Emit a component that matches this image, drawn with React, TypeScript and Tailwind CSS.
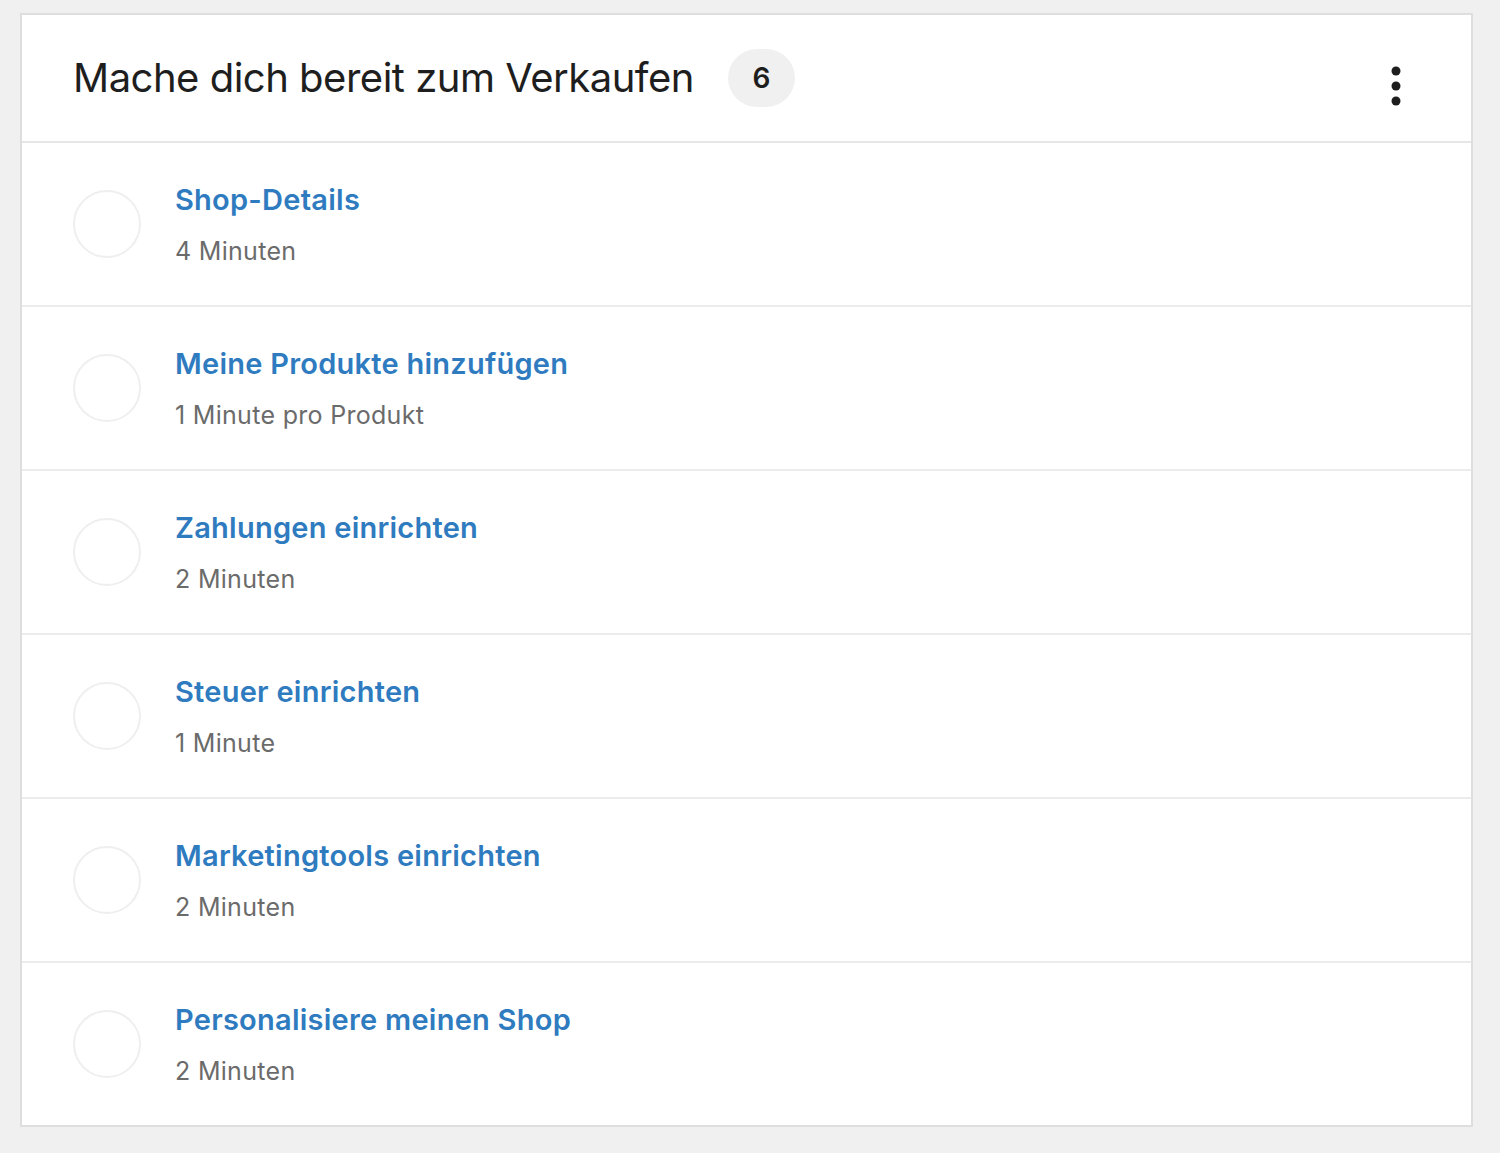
const tasks = [
  { title: 'Shop-Details', time: '4 Minuten' },
  { title: 'Meine Produkte hinzufügen', time: '1 Minute pro Produkt' },
  { title: 'Zahlungen einrichten', time: '2 Minuten' },
  { title: 'Steuer einrichten', time: '1 Minute' },
  { title: 'Marketingtools einrichten', time: '2 Minuten' },
  { title: 'Personalisiere meinen Shop', time: '2 Minuten' },
];

function MoreIcon() {
  return (
    <svg width="12" height="42" viewBox="0 0 12 42" fill="#1e1e1e">
      <circle cx="6" cy="6" r="4.5" />
      <circle cx="6" cy="21" r="4.5" />
      <circle cx="6" cy="36" r="4.5" />
    </svg>
  );
}

export default function App() {
  return (
    <div
      className="min-h-[1153px] bg-[#f0f0f0] pt-[13px] pl-[20px] pr-[27px] pb-[27px]"
      style={{ fontFamily: 'Inter, "Noto Sans", sans-serif' }}
    >
      <div className="bg-white border-2 border-[#dedede]">
        {/* Header */}
        <div className="flex items-center h-[128px] pl-[51px] pr-[69px] border-b-2 border-[#e6e6e6]">
          <h2 className="text-[40px] leading-none text-[#1e1e1e] tracking-[-0.5px]">
            Mache dich bereit zum Verkaufen
          </h2>
          <span className="ml-[34px] flex items-center justify-center w-[67px] h-[58px] rounded-full bg-[#f0f0f0] text-[28px] font-semibold text-[#1e1e1e]">
            6
          </span>
          <button className="ml-auto mt-[16px] flex items-center justify-center">
            <MoreIcon />
          </button>
        </div>

        {/* Tasks */}
        <ul>
          {tasks.map((t, i) => (
            <li
              key={t.title}
              className={`flex items-center pl-[51px] ${
                i < tasks.length - 1 ? 'h-[164px] border-b-2 border-[#ececec]' : 'h-[162px]'
              }`}
            >
              <div className="w-[68px] h-[68px] rounded-full border-2 border-[#efefef] shrink-0" />
              <div className="ml-[34px] flex flex-col">
                <a href="#" className="text-[29px] font-semibold leading-none text-[#2f7bbf] tracking-[0.25px]">
                  {t.title}
                </a>
                <span className="mt-[25px] text-[25px] leading-none text-[#6b6b6b] tracking-[0.3px]">{t.time}</span>
              </div>
            </li>
          ))}
        </ul>
      </div>
    </div>
  );
}
